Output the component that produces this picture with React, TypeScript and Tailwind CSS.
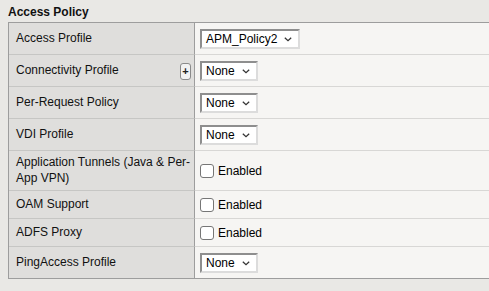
import React from 'react';

function Select({ value, width }: { value: string; width: string }) {
  return (
    <div
      className={`${width} h-[20px] bg-white border-2 border-t-[#8e8e8e] border-l-[#8e8e8e] border-b-[#dcdcdc] border-r-[#dcdcdc] flex items-center justify-between pl-[4px] pr-[6px]`}
    >
      <span className="text-[12px] leading-none text-black">{value}</span>
      <svg width="8" height="5" viewBox="0 0 8 5" className="mt-[1px]">
        <path d="M0.8 0.8 L4 3.8 L7.2 0.8" fill="none" stroke="#333" strokeWidth="1.2" />
      </svg>
    </div>
  );
}

function Checkbox() {
  return (
    <div className="flex items-center gap-[4px]">
      <div className="w-[14px] h-[14px] bg-white border border-[#767676] rounded-[3px]" />
      <span className="text-[12px] text-black">Enabled</span>
    </div>
  );
}

type Row = {
  label: React.ReactNode;
  h: string;
  plus?: boolean;
  value: React.ReactNode;
};

export default function App() {
  const rows: Row[] = [
    { label: 'Access Profile', h: 'h-[32px]', value: <Select value="APM_Policy2" width="w-[100px]" /> },
    { label: 'Connectivity Profile', h: 'h-[32px]', plus: true, value: <Select value="None" width="w-[58px]" /> },
    { label: 'Per-Request Policy', h: 'h-[32px]', value: <Select value="None" width="w-[58px]" /> },
    { label: 'VDI Profile', h: 'h-[32px]', value: <Select value="None" width="w-[58px]" /> },
    {
      label: (
        <>
          Application Tunnels (Java &amp; Per-
          <br />
          App VPN)
        </>
      ),
      h: 'h-[40px]',
      value: <Checkbox />,
    },
    { label: 'OAM Support', h: 'h-[28px]', value: <Checkbox /> },
    { label: 'ADFS Proxy', h: 'h-[28px]', value: <Checkbox /> },
    { label: 'PingAccess Profile', h: 'h-[32px]', value: <Select value="None" width="w-[58px]" /> },
  ];

  return (
    <div className="w-[489px] h-[291px] overflow-hidden bg-[#e9e8e5] font-['Liberation_Sans',Arial,sans-serif] text-[12px] text-[#111]">
      {/* Title */}
      <div className="h-[22px] pl-2 pt-[5px] font-bold leading-[14px]">Access Policy</div>

      {/* Table */}
      <div className="ml-2 border-t border-l border-[#9d9d9d]">
        {rows.map((row, i) => {
          const last = i === rows.length - 1;
          return (
            <div key={i} className={`flex ${row.h}`}>
              <div
                className={`w-[186px] shrink-0 bg-[#dfdedc] border-r border-r-[#9d9d9d] border-b ${
                  last ? 'border-b-[#9d9d9d]' : 'border-b-[#c6c6c4]'
                } flex items-center justify-between pl-[7px] pr-[3px]`}
              >
                <span className="leading-[16px] whitespace-nowrap mb-[2px]">{row.label}</span>
                {row.plus && (
                  <div className="w-[11px] h-[17px] mt-[2px] rounded-[3px] border border-[#8a8a8a] bg-[#f2f2f2] flex items-center justify-center text-[11px] font-bold leading-none text-[#222]">
                    +
                  </div>
                )}
              </div>
              <div
                className={`flex-1 bg-[#f6f5f3] border-b ${
                  last ? 'border-b-[#9d9d9d]' : 'border-b-[#d8d7d5]'
                } flex items-center pl-[5px]`}
              >
                {row.value}
              </div>
            </div>
          );
        })}
      </div>
    </div>
  );
}
